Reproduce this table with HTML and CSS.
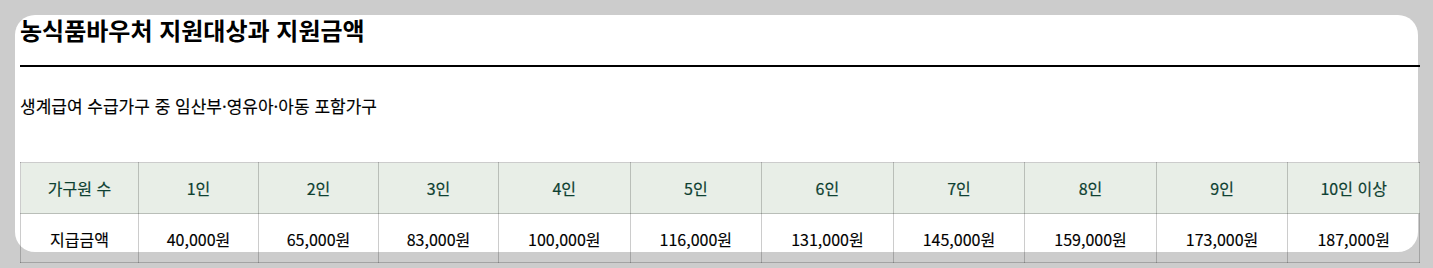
FILE: index.html
```html
<!DOCTYPE html>
<html lang="ko">
<head>
<meta charset="utf-8">
<title>농식품바우처 지원대상과 지원금액</title>
<link rel="stylesheet" href="styles.css">
</head>
<body>
<div class="card">
  <h1 class="title">농식품바우처 지원대상과 지원금액</h1>
  <p class="subtitle">생계급여 수급가구 중 임산부·영유아·아동 포함가구</p>
  <table class="amounts">
    <colgroup>
      <col class="c-first">
      <col class="c-narrow">
      <col class="c-narrow">
      <col class="c-narrow">
      <col><col><col><col><col><col><col>
    </colgroup>
    <thead>
      <tr>
        <th>가구원 수</th>
        <th>1인</th>
        <th>2인</th>
        <th>3인</th>
        <th>4인</th>
        <th>5인</th>
        <th>6인</th>
        <th>7인</th>
        <th>8인</th>
        <th>9인</th>
        <th>10인 이상</th>
      </tr>
    </thead>
    <tbody>
      <tr>
        <td>지급금액</td>
        <td>40,000원</td>
        <td>65,000원</td>
        <td>83,000원</td>
        <td>100,000원</td>
        <td>116,000원</td>
        <td>131,000원</td>
        <td>145,000원</td>
        <td>159,000원</td>
        <td>173,000원</td>
        <td>187,000원</td>
      </tr>
    </tbody>
  </table>
</div>
</body>
</html>
```
FILE: styles.css
```css
html, body {
  margin: 0;
  padding: 0;
  background: #cccccc;
}
body {
  padding: 15px 0 20px;
  font-family: "Noto Sans CJK KR", "Noto Sans", sans-serif;
  color: #000;
}
.card {
  box-sizing: border-box;
  margin: 0 15px;
  height: 237px;
  background: #ffffff;
  border-radius: 20px;
  padding-left: 5px;
}
.title {
  width: 1400px;
  margin: 0;
  font-size: 24px;
  font-weight: 700;
  line-height: 30px;
  padding-bottom: 20px;
  border-bottom: 2px solid #000;
}
.subtitle {
  margin: 27px 0 0;
  font-size: 17px;
  font-weight: 400;
  line-height: 24px;
  -webkit-text-stroke: 0.15px currentColor;
}
.amounts {
  margin-top: 44px;
  width: 1400px;
  table-layout: fixed;
  border-collapse: collapse;
  border: 1px solid rgba(0, 0, 0, 0.2);
}
.c-first { width: 118px; }
.c-narrow { width: 120px; }
.amounts th,
.amounts td {
  border: 1px solid rgba(0, 0, 0, 0.2);
  padding: 0;
  text-align: center;
  font-size: 16px;
}
.amounts th {
  height: 50px;
  background: #e8eee7;
  color: #0d4031;
  font-weight: 400;
  -webkit-text-stroke: 0.2px currentColor;
}
.amounts td {
  height: 46px;
  color: #000;
  font-weight: 400;
  padding-top: 2px;
  -webkit-text-stroke: 0.15px currentColor;
}
```
